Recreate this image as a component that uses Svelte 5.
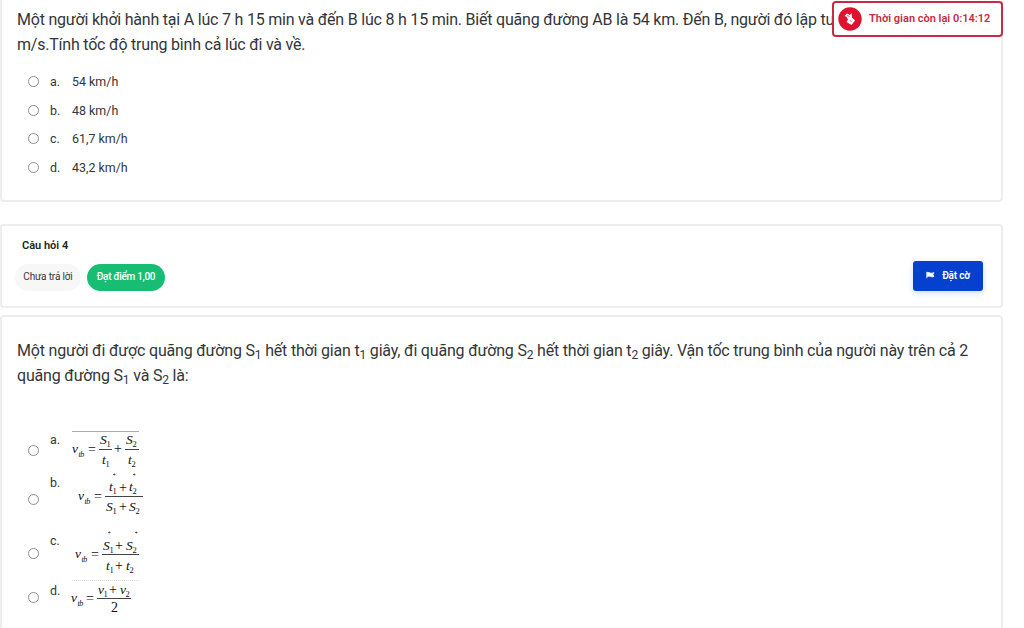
<script lang="ts">
  const speedAnswers = [
    { key: 'a', text: '54 km/h' },
    { key: 'b', text: '48 km/h' },
    { key: 'c', text: '61,7 km/h' },
    { key: 'd', text: '43,2 km/h' }
  ];

  // each part is [x, baseline, symbol, subscript]
  const formulas = [
    {
      key: 'a',
      height: 44,
      equals: [18, 25],
      speed: [2, 25],
      parts: [
        [30, 16, 'S', '1'],
        [32, 36, 't', '1'],
        [56, 16, 'S', '2'],
        [58, 36, 't', '2']
      ],
      plus: [[44, 25]],
      bars: [
        [29, 42, 21.5],
        [55, 69, 21.5]
      ],
      top: 'M2 3.5H69',
      dots: []
    },
    {
      key: 'b',
      height: 54,
      equals: [24, 28],
      speed: [8, 28],
      parts: [
        [39, 19, 't', '1'],
        [59, 19, 't', '2'],
        [36, 39, 'S', '1'],
        [59, 39, 'S', '2']
      ],
      plus: [
        [49, 20],
        [49, 39]
      ],
      bars: [[35, 73, 24.5]],
      top: '',
      dots: [44, 64]
    },
    {
      key: 'c',
      height: 54,
      equals: [21, 32],
      speed: [5, 32],
      parts: [
        [33, 24, 'S', '1'],
        [56, 24, 'S', '2'],
        [36, 44, 't', '1'],
        [56, 44, 't', '2']
      ],
      plus: [
        [45, 24],
        [45, 44]
      ],
      bars: [[32, 69, 28.5]],
      top: '',
      dots: [39, 66]
    },
    {
      key: 'd',
      height: 34,
      equals: [16, 22],
      speed: [1, 22],
      parts: [
        [28, 14, 'v', '1'],
        [50, 14, 'v', '2']
      ],
      plus: [[39, 14]],
      bars: [[27, 61, 18.5]],
      top: 'M2 .5H69',
      dots: []
    }
  ];
</script>

<main>
  <section class="card first">
    <p class="question">
      <span class="line">Một người khởi hành tại A lúc 7 h 15 min và đến B lúc 8 h 15 min. Biết quãng đường AB là 54 km. Đến B, người đó lập tư</span>
      <span class="line">m/s.Tính tốc độ trung bình cả lúc đi và về.</span>
    </p>
    <div class="answers">
      {#each speedAnswers as answer (answer.key)}
        <label class="answer">
          <input type="radio" name="q3" />
          <span class="key">{answer.key}.</span>
          <span>{answer.text}</span>
        </label>
      {/each}
    </div>
  </section>

  <section class="card info">
    <div>
      <h3>Câu hỏi 4</h3>
      <div class="badges">
        <span class="badge">Chưa trả lời</span>
        <span class="badge grade">Đạt điểm 1,00</span>
      </div>
    </div>
    <button type="button">
      <svg width="9" height="8" viewBox="0 0 9 8">
        <path d="M.8 .8V7.4M1.2 1.6Q2.8 1.2 4.3 2T7.8 1.6L7 3.6L7.8 5.6Q6 6.2 4.5 5.4T1.2 5.6Z" />
      </svg>
      Đặt cờ
    </button>
  </section>

  <section class="card second">
    <p class="question wide">
      <span class="line">Một người đi được quãng đường S<sub>1</sub> hết thời gian t<sub>1</sub> giây, đi quãng đường S<sub>2</sub> hết thời gian t<sub>2</sub> giây. Vận tốc trung bình của người này trên cả 2</span>
      <span class="line">quãng đường S<sub>1</sub> và S<sub>2</sub> là:</span>
    </p>
    <div class="formulas">
      {#each formulas as f (f.key)}
        <label class="answer formula {f.key}">
          <input type="radio" name="q4" />
          <span class="key">{f.key}.</span>
          <svg width="76" height={f.height} viewBox="0 0 76 {f.height}">
            {#if f.top}
              <path class="top" d={f.top} />
            {/if}
            {#each f.dots as x}
              <path class="dot" d="M{x - 1} {f.key === 'b' ? 2.5 : 6.5}h2.5m-1.2 -1v2" />
            {/each}
            <text x={f.speed[0]} y={f.speed[1]}>v</text>
            <text class="tb" x={f.speed[0] + 6.5} y={f.speed[1] + 4}>tb</text>
            <text class="op" x={f.equals[0]} y={f.equals[1] + 1}>=</text>
            {#each f.parts as [x, y, symbol, sub]}
              <text {x} {y}>{symbol}</text>
              <text class="sub" x={Number(x) + (symbol === 'S' ? 6.5 : symbol === 'v' ? 5.5 : 3.5)} y={Number(y) + 3}>{sub}</text>
            {/each}
            {#each f.plus as [x, y]}
              <text class="op" {x} {y}>+</text>
            {/each}
            {#each f.bars as [x1, x2, y]}
              <path class="bar" d="M{x1} {y}H{x2}" />
            {/each}
            {#if f.key === 'd'}
              <text class="op" x="41" y="32">2</text>
            {/if}
          </svg>
        </label>
      {/each}
    </div>
  </section>

  <aside class="timer">
    <svg width="24" height="24" viewBox="0 0 24 24">
      <circle cx="12" cy="12" r="11.7" fill="#dc1430" />
      <path d="M6.5 9L9 6.5L12 8L13.5 6L14 10.5L17 13.5L13.5 18L8.5 15L10 12.5L8.5 9.8Z" fill="#fff" />
      <path d="M9 8.5L11.5 9.5M12 13.5L13.5 14.5" fill="none" stroke="#dc1430" stroke-width=".7" />
    </svg>
    <span>Thời gian còn lại 0:14:12</span>
  </aside>
</main>

<style>
  :global(body) {
    background: #fff;
  }

  main {
    position: relative;
    height: 628px;
    overflow: hidden;
    font-family: Roboto, sans-serif;
    color: #333639;
  }

  .card {
    box-sizing: border-box;
    width: 1003px;
    border: 2px solid #ededed;
    border-radius: 4px;
    background: #fff;
  }

  .first {
    height: 202px;
    padding: 7px 15px 0;
    border-top: 0;
    border-radius: 0 0 4px 4px;
  }

  .question {
    margin: 0;
    font-size: 16px;
    letter-spacing: -0.212px;
    line-height: 25px;
  }

  .wide {
    letter-spacing: -0.19px;
  }

  .line {
    display: block;
    white-space: nowrap;
  }

  sub {
    font-size: 12px;
    line-height: 0;
    vertical-align: baseline;
    position: relative;
    top: 3px;
  }

  .answers {
    padding: 10px 0 0 10px;
  }

  .answer {
    display: flex;
    align-items: center;
    height: 28.8px;
    font-size: 12.45px;
  }

  input {
    appearance: none;
    box-sizing: border-box;
    flex: none;
    width: 11px;
    height: 11px;
    margin: 0 11px 0 1px;
    border: 1px solid #8f8f8f;
    border-radius: 50%;
    background: #fff;
  }

  .key {
    width: 22px;
  }

  .info {
    display: flex;
    justify-content: space-between;
    height: 84px;
    margin-top: 22px;
    padding: 13px 18px 0 13px;
  }

  h3 {
    margin: 0 0 11px 7px;
    font-size: 11px;
    font-weight: 600;
    line-height: 14px;
    color: #1c1e20;
  }

  .badges {
    display: flex;
    gap: 6px;
  }

  .badge {
    box-sizing: border-box;
    width: 66px;
    height: 27px;
    border-radius: 14px;
    background: #f7f7f7;
    font-size: 10px;
    letter-spacing: -0.15px;
    line-height: 26px;
    text-align: center;
    white-space: nowrap;
  }

  .grade {
    width: 78px;
    background: #18bd74;
    color: #fff;
    letter-spacing: -0.3px;
    font-weight: 500;
  }

  button {
    display: flex;
    align-items: center;
    justify-content: center;
    gap: 7px;
    width: 70px;
    height: 30px;
    margin-top: 22px;
    padding: 0 0 2px;
    border: 0;
    border-radius: 3px;
    background: #0640cf;
    box-shadow: 0 2px 6px #cfdcfa;
    color: #fff;
    font: 600 10px Roboto, sans-serif;
    letter-spacing: -0.2px;
  }

  button path {
    fill: #fff;
    stroke: #fff;
    stroke-width: 0.8;
  }

  .second {
    height: 330px;
    margin-top: 7px;
    padding: 21px 15px 0;
  }

  .formulas {
    padding: 40px 0 0 10px;
  }

  .formula .key {
    align-self: flex-start;
    width: 20px;
    line-height: 16px;
  }

  .formula svg {
    overflow: visible;
  }

  .formula.a {
    height: 44px;
  }

  .formula.b,
  .formula.c {
    height: 54px;
  }

  .formula.d {
    height: 34px;
  }

  .a .key {
    padding-top: 4px;
  }

  .b .key,
  .d .key {
    padding-top: 3px;
  }

  .c .key {
    padding-top: 7px;
  }

  text {
    fill: #111;
    font: italic 13.5px 'Liberation Serif', serif;
  }

  .sub {
    font-size: 8.5px;
    font-style: normal;
  }

  .tb {
    font-size: 8px;
    letter-spacing: -0.5px;
  }

  .op {
    font-size: 14px;
    font-style: normal;
  }

  .bar,
  .dot {
    fill: none;
    stroke: #444;
  }

  .dot {
    stroke-width: 0.8;
  }

  .top {
    stroke: #aaa;
  }

  .d .top {
    stroke: #ddd;
    stroke-dasharray: 1 1;
  }

  /* floats over the question while the quiz is running */
  .timer {
    position: absolute;
    top: 1px;
    left: 832px;
    box-sizing: border-box;
    display: flex;
    align-items: center;
    gap: 7px;
    width: 171px;
    height: 36px;
    padding-left: 4px;
    border: 2px solid #c52b45;
    border-radius: 4px;
    background: #fff;
    color: #c52b45;
    font-size: 11px;
    font-weight: 600;
    line-height: 14px;
    white-space: nowrap;
  }

  .timer span {
    padding-bottom: 1px;
  }
</style>
